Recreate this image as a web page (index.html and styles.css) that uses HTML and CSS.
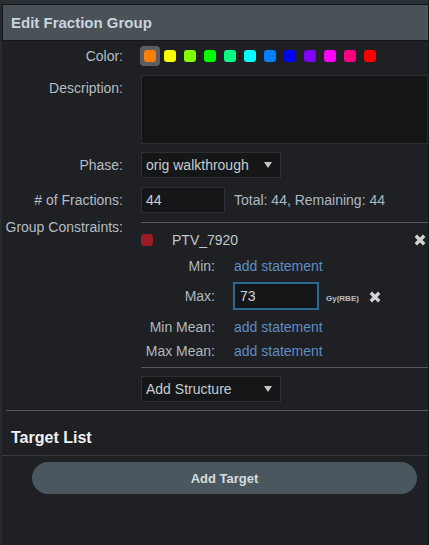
FILE: index.html
```html
<!DOCTYPE html>
<html>
<head>
<meta charset="utf-8">
<link rel="stylesheet" href="styles.css">
</head>
<body>
<div class="panel">
  <div class="topstrip"></div>
  <div class="header">Edit Fraction Group</div>
  <div class="form">
    <div class="row row-color">
      <div class="label">Color:</div>
      <div class="swatches">
        <span class="slot selected"><span class="dot c1"></span></span>
        <span class="slot"><span class="dot c2"></span></span>
        <span class="slot"><span class="dot c3"></span></span>
        <span class="slot"><span class="dot c4"></span></span>
        <span class="slot"><span class="dot c5"></span></span>
        <span class="slot"><span class="dot c6"></span></span>
        <span class="slot"><span class="dot c7"></span></span>
        <span class="slot"><span class="dot c8"></span></span>
        <span class="slot"><span class="dot c9"></span></span>
        <span class="slot"><span class="dot c10"></span></span>
        <span class="slot"><span class="dot c11"></span></span>
        <span class="slot"><span class="dot c12"></span></span>
      </div>
    </div>
    <div class="row row-desc">
      <div class="label">Description:</div>
      <div class="textarea"></div>
    </div>
    <div class="row row-phase">
      <div class="label">Phase:</div>
      <div class="select">
        <span>orig walkthrough</span>
        <svg class="caret" width="8" height="6" viewBox="0 0 8 6"><polygon points="0,0 8,0 4,6" fill="#c9c9c9"/></svg>
      </div>
    </div>
    <div class="row row-frac">
      <div class="label">#&nbsp;of Fractions:</div>
      <div class="input small">44</div>
      <div class="totals">Total: 44, Remaining: 44</div>
    </div>
    <div class="row row-group">
      <div class="label label-group">Group Constraints:</div>
      <div class="group-col">
        <div class="constraints">
          <div class="struct-row">
            <span class="struct-dot"></span>
            <span class="struct-name">PTV_7920</span>
            <svg class="xbtn" width="12" height="12" viewBox="0 0 12 12"><path d="M1.8 1.8 L10.2 10.2 M10.2 1.8 L1.8 10.2" stroke="#d2d2d2" stroke-width="3.4"/></svg>
          </div>
          <div class="crow">
            <div class="clabel">Min:</div>
            <span class="link">add statement</span>
          </div>
          <div class="crow crow-max">
            <div class="clabel">Max:</div>
            <div class="maxval">
              <div class="input focus">73</div>
              <span class="unit">Gy(RBE)</span>
              <svg class="xbtn2" width="12" height="12" viewBox="0 0 12 12"><path d="M1.8 1.8 L10.2 10.2 M10.2 1.8 L1.8 10.2" stroke="#d2d2d2" stroke-width="3.4"/></svg>
            </div>
          </div>
          <div class="crow">
            <div class="clabel">Min Mean:</div>
            <span class="link">add statement</span>
          </div>
          <div class="crow">
            <div class="clabel">Max Mean:</div>
            <span class="link">add statement</span>
          </div>
        </div>
        <div class="select add-structure">
          <span>Add Structure</span>
          <svg class="caret" width="8" height="6" viewBox="0 0 8 6"><polygon points="0,0 8,0 4,6" fill="#c9c9c9"/></svg>
        </div>
      </div>
    </div>
    <div class="divider"></div>
  </div>
  <div class="section-title">Target List</div>
  <div class="section-line"></div>
  <div class="btn">Add Target</div>
</div>
</body>
</html>
```

FILE: styles.css
```css
* { box-sizing: border-box; }
html, body { margin: 0; padding: 0; }
body {
  background: #1e2023;
  font-family: "Liberation Sans", Arial, sans-serif;
  font-size: 14px;
  color: #b5bdc3;
  width: 429px;
  height: 545px;
  overflow: hidden;
}
.panel {
  height: 545px;
  border-left: 2px solid #262b2f;
  border-right: 1px solid #151719;
}
.topstrip { height: 4px; background: #283035; }
.header {
  height: 37px;
  border: 1px solid #131517;
  border-right: 0;
  background: #4a5157;
  color: #c9d5dd;
  font-weight: bold;
  font-size: 15px;
  line-height: 35px;
  padding-left: 8px;
}
.form { padding-top: 5px; }
.row { display: flex; gap: 18px; }
.label { width: 121px; flex: none; text-align: right; line-height: 16px; }

.row-color { height: 20px; align-items: center; }
.swatches { display: flex; margin-left: -1px; }
.slot {
  width: 20px; height: 20px;
  display: flex; align-items: center; justify-content: center;
  border-radius: 4px;
}
.slot.selected { background: #5b5e61; }
.dot { width: 12px; height: 12px; border-radius: 3px; }
.c1 { background: #ff7f00; }
.c2 { background: #ffff00; }
.c3 { background: #80ff00; }
.c4 { background: #00ff00; }
.c5 { background: #00ff80; }
.c6 { background: #00ffff; }
.c7 { background: #0080ff; }
.c8 { background: #0000ff; }
.c9 { background: #8000ff; }
.c10 { background: #ff00ff; }
.c11 { background: #ff0080; }
.c12 { background: #ff0000; }

.row-desc { margin-top: 9px; }
.row-desc .label { padding-top: 5px; }
.textarea {
  flex: 1;
  height: 69px;
  background: #141517;
  border: 1px solid #2b2e31;
}

.row-phase { margin-top: 8px; align-items: center; }
.select {
  width: 140px;
  height: 26px;
  background: #151618;
  border: 1px solid #2d3033;
  display: flex;
  align-items: center;
  justify-content: space-between;
  padding: 0 8px 0 4px;
  color: #c6ccd0;
}
.caret { display: block; }

.row-frac { margin-top: 9px; align-items: center; }
.input {
  background: #151618;
  border: 1px solid #2d3033;
  color: #c9cfd3;
  display: flex;
  align-items: center;
  padding-left: 4px;
}
.input.small { width: 84px; height: 26px; }
.totals { margin-left: -9px; color: #acb9c2; }

.row-group { margin-top: 9px; }
.label-group { margin-top: -3px; }
.group-col { flex: 1; }
.constraints {
  border-top: 1px solid #55595c;
  border-bottom: 1px solid #55595c;
  padding-bottom: 4px;
}
.struct-row {
  display: flex;
  align-items: center;
  height: 24px;
  margin-top: 5px;
}
.struct-dot { width: 12px; height: 12px; border-radius: 3px; background: #9b1b29; flex: none; }
.struct-name { margin-left: 19px; flex: 1; color: #c0c7cc; }
.xbtn { display: block; margin-right: 2px; }

.crow { display: flex; align-items: center; gap: 18px; height: 24px; }
.crow:nth-child(2) { margin-top: 2px; }
.clabel { width: 74px; flex: none; text-align: right; color: #b0b8be; }
.link { color: #5b8ec3; margin-left: 1px; }
.crow-max { height: auto; padding: 4px 0 5px; }
.maxval { display: flex; align-items: center; }
.input.focus {
  width: 86px;
  height: 28px;
  border: 2px solid #2c6a91;
  padding-left: 5px;
  color: #d0d5d8;
}
.unit { font-size: 8px; font-weight: bold; color: #b8c0c6; margin-left: 7px; margin-top: 4px; }
.xbtn2 { display: block; margin-left: 10px; margin-top: 2px; }

.add-structure { margin-top: 8px; }
.divider { margin: 8px 0 0 4px; height: 1px; background: #55595c; }

.section-title {
  padding: 17px 0 7px 9px;
  line-height: 20px;
  font-size: 16px;
  font-weight: bold;
  color: #eef1f4;
}
.section-line { height: 1px; background: #363a3d; }
.btn {
  margin: 6px 11px 0 30px;
  height: 32px;
  border-radius: 16px;
  background: #4a575e;
  color: #d6dbde;
  font-weight: bold;
  font-size: 13px;
  display: flex;
  align-items: center;
  justify-content: center;
}
```
